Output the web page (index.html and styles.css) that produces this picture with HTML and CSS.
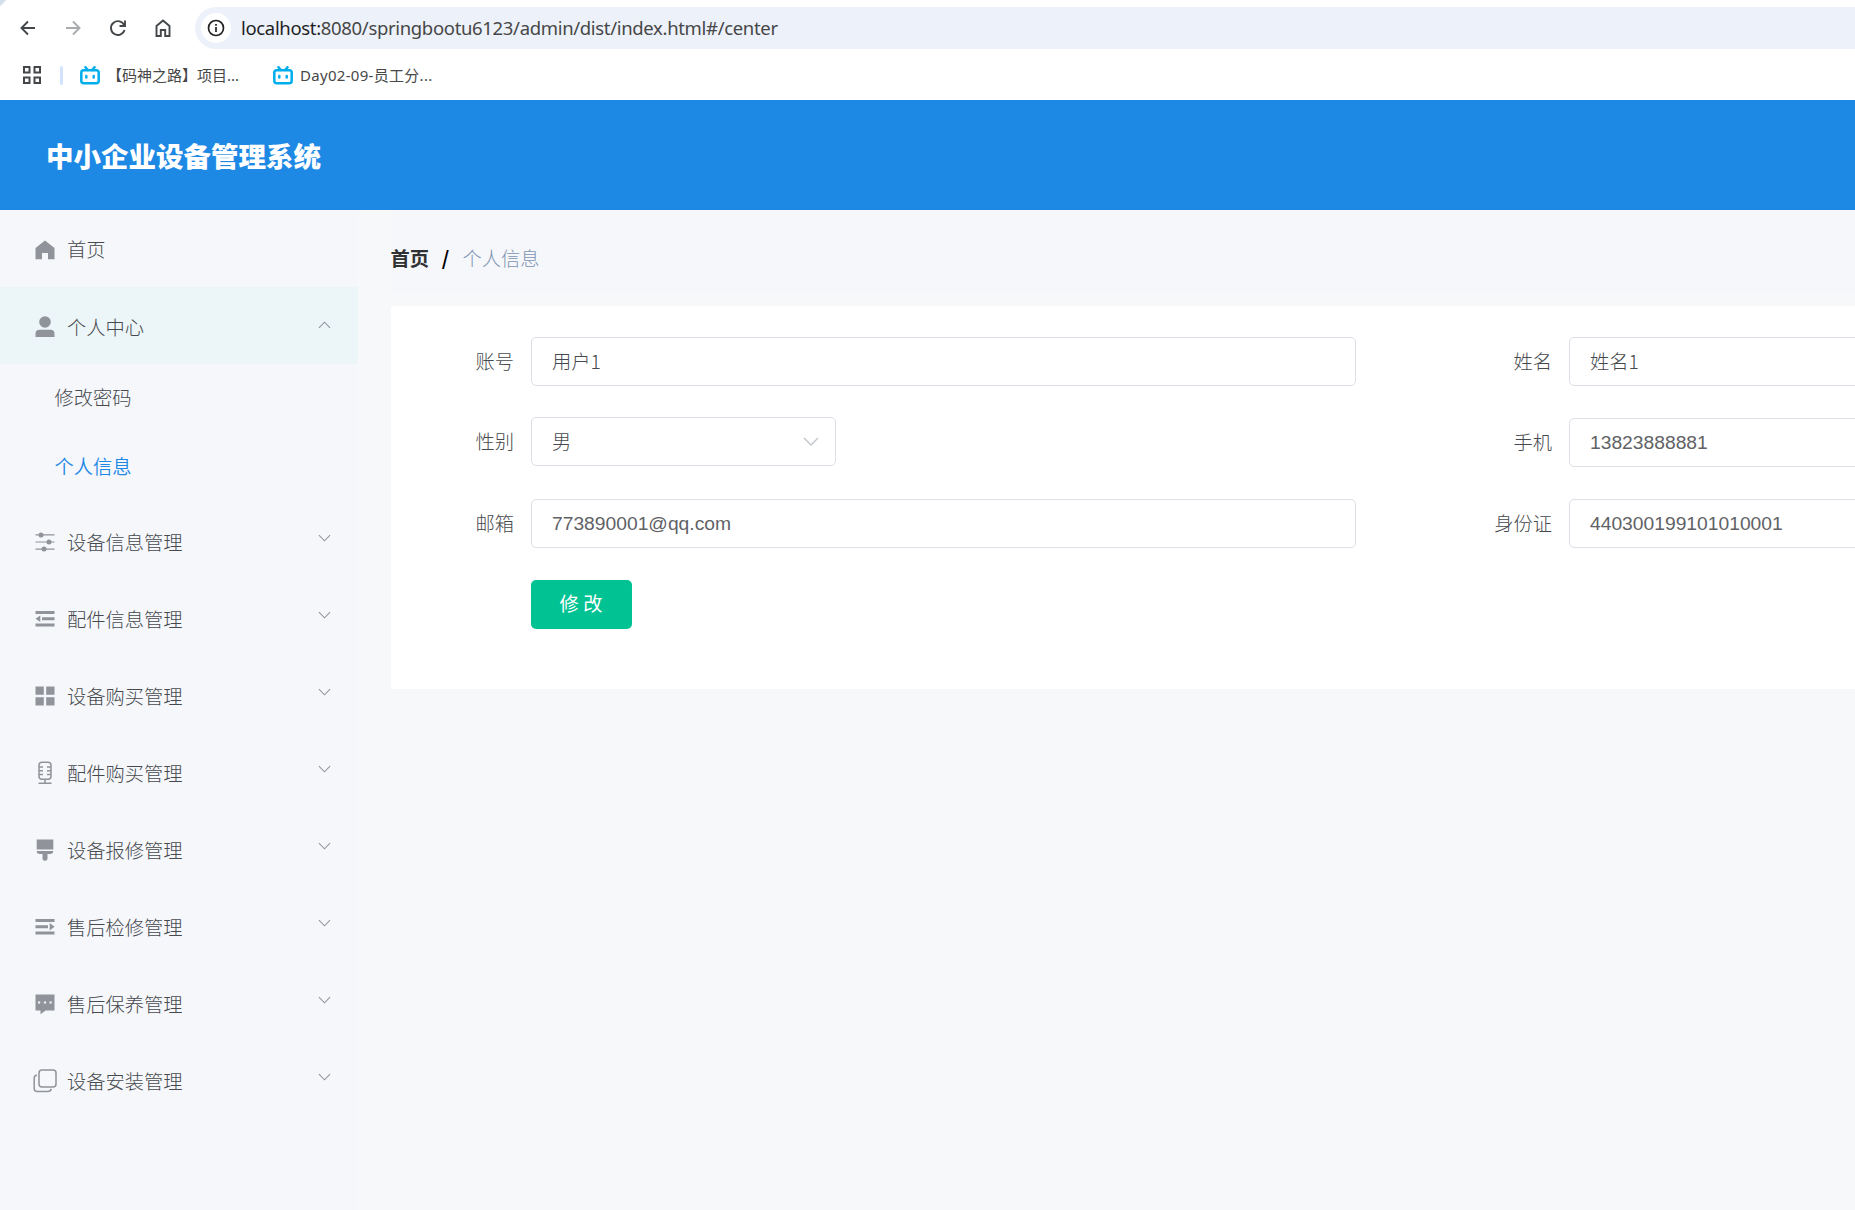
FILE: index.html
```html
<!DOCTYPE html>
<html lang="zh-CN">
<head>
<meta charset="utf-8">
<title>中小企业设备管理系统</title>
<link rel="stylesheet" href="styles.css">
</head>
<body>
<div class="browser">
  <div class="toolbar">
    <svg class="nav-icon" viewBox="0 0 24 24"><path d="M19 12H6M12 5.500 5.500 12l6.500 6.500"/></svg>
    <svg class="nav-icon nav-icon-off" viewBox="0 0 24 24"><path d="M5 12h13M12 5.500 18.500 12 12 18.500"/></svg>
    <svg class="nav-icon" viewBox="0 0 24 24"><path d="M18.300 9.500A6.900 6.900 0 1 0 18.500 14M19 4.500V10h-5.500"/></svg>
    <svg class="nav-icon" viewBox="0 0 24 24"><path d="M5.500 20V10L12 4.500 18.500 10v10h-4.300v-6H9.800v6z"/></svg>
    <div class="address">
      <span class="site-info"><svg viewBox="0 0 18 18"><circle cx="9" cy="9" r="7.500"/><path d="M9 8v5M9 5v1.800"/></svg></span>
      <span class="url"><b>localhost:</b>8080/springbootu6123/admin/dist/index.html#/center</span>
    </div>
  </div>
  <div class="bookmarks">
    <svg class="apps" viewBox="0 0 18 18"><path d="M1 1h5.500v5.500H1zM11.500 1H17v5.500h-5.500zM1 11.500h5.500V17H1zM11.500 11.500H17V17h-5.500z"/></svg>
    <i class="divider"></i>
    <span class="bookmark bookmark-first"><svg class="tv" viewBox="0 0 20 19"><path d="M5.500 1.200 7.800 4M14.500 1.200 12.200 4"/><rect x="1.300" y="4.300" width="17.400" height="13" rx="2.500"/><path d="M6.300 10v1.500M13.700 10v1.500"/></svg><span>【码神之路】项目...</span></span>
    <span class="bookmark bookmark-latin"><svg class="tv" viewBox="0 0 20 19"><path d="M5.500 1.200 7.800 4M14.500 1.200 12.200 4"/><rect x="1.300" y="4.300" width="17.400" height="13" rx="2.500"/><path d="M6.300 10v1.500M13.700 10v1.500"/></svg><span>Day02-09-员工分...</span></span>
  </div>
</div>
<header class="header"><h1>中小企业设备管理系统</h1></header>
<div class="layout">
  <nav class="sidebar">
    <div class="item item-home"><svg class="icon" viewBox="0 0 24 24"><path d="M12 2.500 21.500 10v11.200H15V15H9v6.200H2.500V10z"/></svg><span>首页</span></div>
    <div class="item item-open"><svg class="icon" viewBox="0 0 24 24"><circle cx="12" cy="7" r="5.800"/><path d="M2.500 22v-3.200a4 4 0 0 1 4-4h11a4 4 0 0 1 4 4V22z"/></svg><span>个人中心</span><svg class="arrow arrow-up" viewBox="0 0 14 8"><path d="m1 7 6-6 6 6"/></svg></div>
    <div class="sub">修改密码</div>
    <div class="sub sub-active">个人信息</div>
    <div class="item"><svg class="icon" viewBox="0 0 24 24"><path d="M2.500 4.300h19v1.200h-19zM2.500 11.400h19v1.200h-19zM2.500 18.500h19v1.200h-19z"/><circle cx="8" cy="4.900" r="2.500"/><circle cx="16" cy="12" r="2.500"/><circle cx="11" cy="19.100" r="2.500"/></svg><span>设备信息管理</span><svg class="arrow" viewBox="0 0 14 8"><path d="m1 1 6 6 6-6"/></svg></div>
    <div class="item"><svg class="icon" viewBox="0 0 24 24"><path d="M2.500 4h19v3h-19zM9 10.300h12.500v3H9zM2.500 16.500h19v3h-19zM2.500 11.800 7.300 8.500v6.600z"/></svg><span>配件信息管理</span><svg class="arrow" viewBox="0 0 14 8"><path d="m1 1 6 6 6-6"/></svg></div>
    <div class="item"><svg class="icon" viewBox="0 0 24 24"><path d="M2.500 2.500h8.300v8.200H2.500zM13.200 2.500h8.300v8.200h-8.300zM2.500 13.300h8.300v8.200H2.500zM13.200 13.300h8.300v8.200h-8.300z"/></svg><span>设备购买管理</span><svg class="arrow" viewBox="0 0 14 8"><path d="m1 1 6 6 6-6"/></svg></div>
    <div class="item"><svg class="icon icon-line" viewBox="0 0 24 24"><rect x="6" y="1.200" width="12" height="17" rx="3"/><path d="M6 6h4M6 9.800h4M6 13.600h4M14 6h4M14 9.800h4M14 13.600h4M12 18.200V22M5.500 22.300h13"/></svg><span>配件购买管理</span><svg class="arrow" viewBox="0 0 14 8"><path d="m1 1 6 6 6-6"/></svg></div>
    <div class="item"><svg class="icon" viewBox="0 0 24 24"><path d="M3.700 1.500h16.600v10H3.700zM3.700 13h16.600c0 2-1.300 3-3 3h-2.800v4.200a2.500 2.500 0 0 1-5 0V16H6.700c-1.700 0-3-1-3-3z"/></svg><span>设备报修管理</span><svg class="arrow" viewBox="0 0 14 8"><path d="m1 1 6 6 6-6"/></svg></div>
    <div class="item"><svg class="icon" viewBox="0 0 24 24"><path d="M2.500 4h19v3h-19zM2.500 10.300H15v3H2.500zM2.500 16.500h19v3h-19zM21.500 11.800l-4.800-3.800v7.600z"/></svg><span>售后检修管理</span><svg class="arrow" viewBox="0 0 14 8"><path d="m1 1 6 6 6-6"/></svg></div>
    <div class="item"><svg class="icon" viewBox="0 0 24 24"><path fill-rule="evenodd" d="M2.500 2.500h19v16H12.500l-5 3.700v-3.700h-5zM5 9.400v2h2.200v-2zM10.900 9.400v2h2.200v-2zM16.500 9.400v2h2.200v-2z"/></svg><span>售后保养管理</span><svg class="arrow" viewBox="0 0 14 8"><path d="m1 1 6 6 6-6"/></svg></div>
    <div class="item"><svg class="icon icon-line" viewBox="0 0 24 24"><rect x="6" y="1" width="17" height="17" rx="3"/><path d="M4 6.200c-2 0-2.800 1-2.800 3V19.500q0 3 3 3h10.300c2.500 0 3.500-.8 3.700-2.600"/></svg><span>设备安装管理</span><svg class="arrow" viewBox="0 0 14 8"><path d="m1 1 6 6 6-6"/></svg></div>
  </nav>
  <main class="main">
    <div class="breadcrumb"><b>首页</b><b class="slash">/</b><span>个人信息</span></div>
    <form class="card">
      <div class="field"><label>账号</label><div class="input">用户1</div></div>
      <div class="field"><label>姓名</label><div class="input">姓名1</div></div>
      <div class="field field-select"><label>性别</label><div class="input select"><span>男</span><svg viewBox="0 0 16 9"><path d="m1 1 7 7 7-7"/></svg></div></div>
      <div class="field"><label>手机</label><div class="input latin">13823888881</div></div>
      <div class="field"><label>邮箱</label><div class="input latin">773890001@qq.com</div></div>
      <div class="field"><label>身份证</label><div class="input latin">440300199101010001</div></div>
      <button class="submit" type="button">修 改</button>
    </form>
  </main>
</div>
</body>
</html>
```
FILE: styles.css
```css
* { box-sizing: border-box; }
body {
  margin: 0;
  height: 1210px;
  display: flex;
  flex-direction: column;
  overflow: hidden;
  background: #f7f8fa;
  color: #46494d;
  font: 300 19.25px/28px "Noto Sans CJK SC", sans-serif;
}
svg { display: block; flex: none; }

.browser { height: 100px; flex: none; background: linear-gradient(135deg, #d5dfec 0 4px, #fff 5px); }
.toolbar { height: 56px; display: flex; align-items: center; padding-left: 16px; gap: 21px; }
.nav-icon { width: 24px; height: 24px; fill: none; stroke: #444749; stroke-width: 1.900; }
.nav-icon-off { stroke: #aaabad; }
.address {
  flex: 1;
  height: 42px;
  display: flex;
  align-items: center;
  gap: 10px;
  padding-left: 6px;
  margin-left: -1px;
  border-radius: 21px 0 0 21px;
  background: #ecf1fa;
}
.site-info { width: 30px; height: 30px; display: grid; place-items: center; border-radius: 50%; background: #fff; }
.site-info svg { width: 18px; height: 18px; fill: none; stroke: #222; stroke-width: 1.700; }
.url { font: 400 18.500px/26px "Noto Sans", sans-serif; letter-spacing: -.330px; color: #474747; white-space: nowrap; }
.url b { font-weight: 400; color: #1f1f1f; }
.bookmarks { height: 38px; display: flex; align-items: center; padding-left: 23px; font: 400 15px/22px "Noto Sans", "Noto Sans CJK SC", sans-serif; color: #474747; }
.apps { width: 18px; height: 18px; fill: none; stroke: #444749; stroke-width: 2; }
.divider { width: 3px; height: 19px; margin: 0 17px 0 19px; border-radius: 2px; background: #d3e3fd; }
.bookmark { display: flex; align-items: center; gap: 7px; white-space: nowrap; }
.bookmark-first { width: 193px; }
.bookmark-latin { letter-spacing: .300px; }
.tv { width: 20px; height: 19px; fill: none; stroke: #00aeec; stroke-width: 2.500; stroke-linecap: round; }

.header { height: 110px; flex: none; display: flex; align-items: center; padding-left: 46px; background: #1e88e5; }
.header h1 { margin: 0; color: #fff; font-size: 27.500px; line-height: 40px; font-weight: 900; }

.layout { flex: 1; display: flex; }
.sidebar { width: 358px; flex: none; background: #f5f7fb; }
.item { height: 77px; display: flex; align-items: center; padding: 2px 27px 0 32.500px; }
.item span { margin-left: 10.500px; flex: 1; }
.item-home { padding-top: 2px; }
.item-home span { padding: 0 0 2px; }
.item-open { background: #ecf5f8; }
.icon { width: 24px; height: 24px; fill: #909399; }
.icon-line { fill: none; stroke: #909399; stroke-width: 1.500; }
.arrow { width: 13px; height: 8px; margin-top: -7px; fill: none; stroke: #909399; stroke-width: 1.100; }
.arrow-up { margin-top: -3px; }
.sub { height: 69px; line-height: 67px; padding-left: 54.500px; }
.sub-active { color: #1e88e5; font-weight: 350; }

.main { flex: 1; padding-left: 33px; min-width: 0; }
.breadcrumb { height: 83px; margin-bottom: 13px; padding-top: 12px; display: flex; align-items: center; background: #f5f7fb; color: #8094b0; }
.breadcrumb b { margin-left: -.500px; color: #303133; font-weight: 700; }
.breadcrumb .slash { width: 34px; text-align: center; color: #000; }
.card {
  height: 383px;
  padding-top: 31px;
  display: grid;
  grid-template-columns: 965px 1037px;
  grid-template-rows: 49px 49px 49px 49px;
  column-gap: 73px;
  row-gap: 32px;
  overflow: hidden;
  background: #fff;
}
.field { display: flex; }
.field label { width: 140px; padding-right: 17px; line-height: 49px; text-align: right; }
.input { flex: 1; height: 49px; padding-left: 20px; border: 1px solid #dcdfe6; border-radius: 5px; line-height: 47px; }
.latin { font-family: "Liberation Sans", sans-serif; font-weight: 400; color: #606266; }
.field-select { margin-top: -1px; }
.select { flex: 0 0 305px; display: flex; align-items: center; justify-content: space-between; padding-right: 16px; }
.select svg { width: 16px; height: 9px; fill: none; stroke: #c0c4cc; stroke-width: 1.400; }
.submit { width: 101px; height: 49px; margin-left: 140px; padding: 0 1px 3px 0; border: 0; border-radius: 5px; background: #00c292; color: #fff; font: inherit; font-weight: 400; }
```
